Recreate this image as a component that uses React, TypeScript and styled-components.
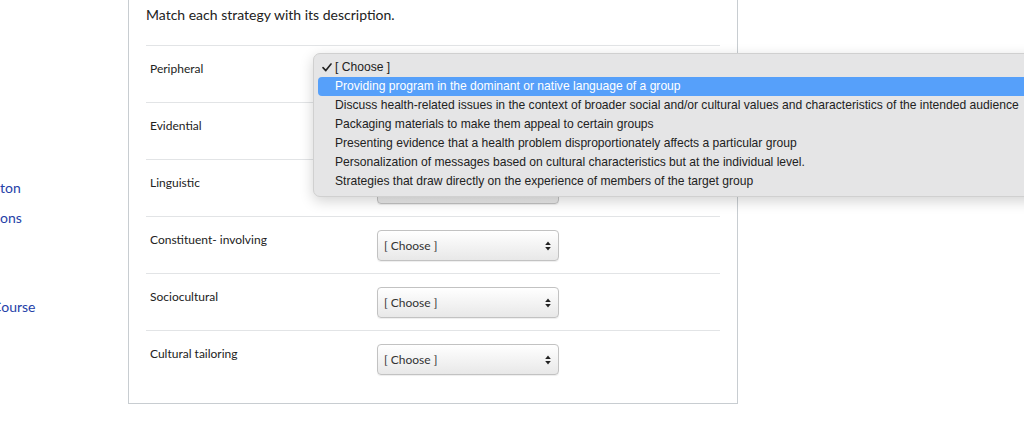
import React from "react";
import styled, { createGlobalStyle } from "styled-components";

const Global = createGlobalStyle`
  *, *::before, *::after { box-sizing: border-box; }
  html, body { margin: 0; padding: 0; background: #fff; overflow: hidden; }
  body { width: 1024px; height: 427px; font-family: Lato, "Open Sans", sans-serif; }
`;

const Page = styled.div`
  display: flex;
  align-items: flex-start;
  width: 1024px;
  height: 427px;
  overflow: hidden;
`;

const Sidebar = styled.nav`
  width: 128px;
  flex: none;
  display: flex;
  flex-direction: column;
  padding-top: 178px;
  overflow: hidden;
`;

const NavLink = styled.a<{ $gap?: number; $shift?: number }>`
  display: block;
  margin-top: ${(p) => p.$gap ?? 0}px;
  margin-left: ${(p) => p.$shift ?? 0}px;
  font-family: Lato, sans-serif;
  font-size: 14px;
  line-height: 20px;
  height: 20px;
  color: #2541a8;
  text-decoration: none;
  white-space: nowrap;
`;

const Panel = styled.section`
  width: 610px;
  flex: none;
  border: 1px solid #c8cdd1;
  border-top: none;
  padding: 5px 17px 16px 17px;
  color: #2d3b45;
`;

const Title = styled.div`
  font-family: Lato, sans-serif;
  font-size: 14px;
  line-height: 20px;
  margin-bottom: 20px;
  color: #222;
`;

const Row = styled.div`
  display: flex;
  align-items: flex-start;
  border-top: 1px solid #e2e4e6;
  padding: 13px 0 12px 4px;
  height: 57px;
`;

const Label = styled.div`
  width: 227px;
  flex: none;
  font-family: Lato, sans-serif;
  font-size: 12px;
  line-height: 16px;
  margin-top: 2px;
  color: #222;
`;

const SelectWrap = styled.div`
  position: relative;
`;

const SelectBox = styled.div`
  width: 182px;
  height: 31px;
  border: 1px solid #c2c2c2;
  border-radius: 4px;
  background: linear-gradient(#ffffff, #e8e8e8);
  box-shadow: 0 1px 1px rgba(0, 0, 0, 0.07);
  display: flex;
  align-items: center;
  justify-content: space-between;
  padding: 0 7px 0 6px;
  font-family: Lato, sans-serif;
  font-size: 12px;
  color: #333;
`;

const Menu = styled.div`
  position: absolute;
  left: -64px;
  top: -6px;
  z-index: 10;
  background: #e5e5e6;
  border: 1px solid #d0d0d0;
  border-radius: 7px;
  box-shadow: 0 4px 14px rgba(0, 0, 0, 0.18);
  padding: 4px 14px 5px 4px;
  white-space: nowrap;
`;

const MenuItem = styled.div<{ $active?: boolean }>`
  position: relative;
  height: 19px;
  line-height: 19px;
  padding-left: 17px;
  padding-right: 8px;
  border-radius: 4px;
  font-family: "Liberation Sans", Arial, sans-serif;
  font-size: 12.1px;
  color: ${(p) => (p.$active ? "#fff" : "#222")};
  background: ${(p) => (p.$active ? "#56a0fa" : "transparent")};
`;

const Check = styled.svg`
  position: absolute;
  left: 4px;
  top: 5px;
`;

const Arrows = () => (
  <svg width="6" height="10" viewBox="0 0 6 10">
    <path d="M3 0.5 L5.8 4 H0.2 Z" fill="#222" />
    <path d="M3 9.5 L5.8 6 H0.2 Z" fill="#222" />
  </svg>
);

const options = [
  "Providing program in the dominant or native language of a group",
  "Discuss health-related issues in the context of broader social and/or cultural values and characteristics of the intended audience",
  "Packaging materials to make them appeal to certain groups",
  "Presenting evidence that a health problem disproportionately affects a particular group",
  "Personalization of messages based on cultural characteristics but at the individual level.",
  "Strategies that draw directly on the experience of members of the target group",
];

const rows = [
  "Peripheral",
  "Evidential",
  "Linguistic",
  "Constituent- involving",
  "Sociocultural",
  "Cultural tailoring",
];

const Select = () => (
  <SelectBox>
    <span>[ Choose ]</span>
    <Arrows />
  </SelectBox>
);

export default function App() {
  return (
    <>
      <Global />
      <Page>
        <Sidebar>
          <NavLink href="#">ton</NavLink>
          <NavLink href="#" $gap={10}>ons</NavLink>
          <NavLink href="#" $gap={69} $shift={-8}>Course</NavLink>
        </Sidebar>
        <Panel>
          <Title>Match each strategy with its description.</Title>
          {rows.map((r, i) => (
            <Row key={r}>
              <Label>{r}</Label>
              <SelectWrap>
                <Select />
                {i === 0 && (
                  <Menu>
                    <MenuItem>
                      <Check width="10" height="9" viewBox="0 0 10 9">
                        <path
                          d="M1 4.6 L3.8 7.6 L9 1"
                          fill="none"
                          stroke="#222"
                          strokeWidth="1.6"
                          strokeLinecap="round"
                          strokeLinejoin="round"
                        />
                      </Check>
                      [ Choose ]
                    </MenuItem>
                    {options.map((o, j) => (
                      <MenuItem key={o} $active={j === 0}>
                        {o}
                      </MenuItem>
                    ))}
                  </Menu>
                )}
              </SelectWrap>
            </Row>
          ))}
        </Panel>
      </Page>
    </>
  );
}
